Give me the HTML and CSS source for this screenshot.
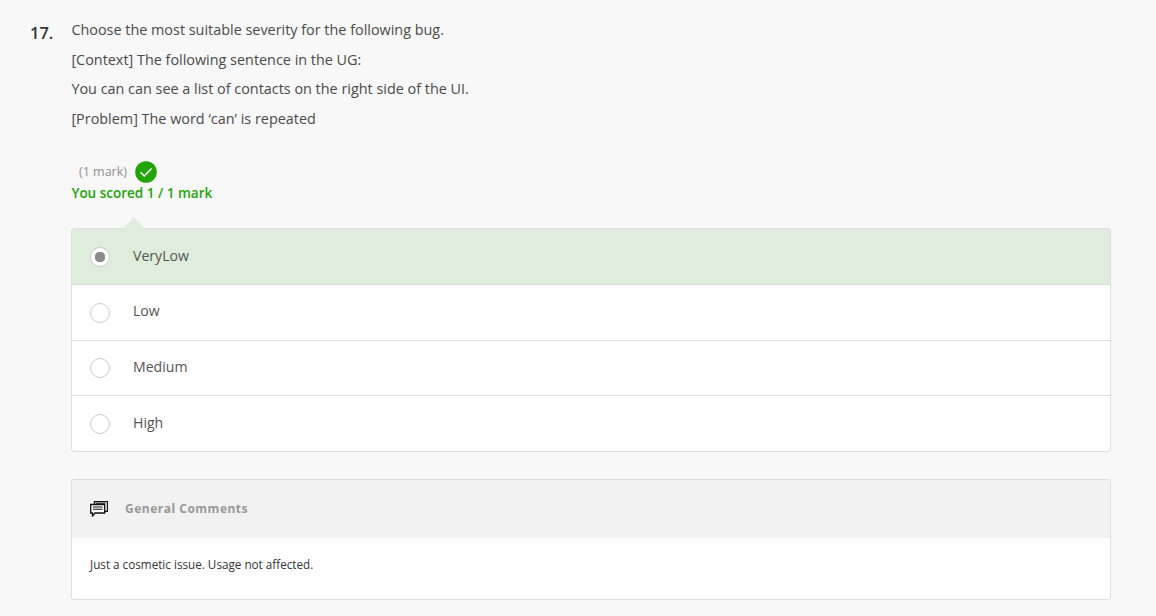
FILE: index.html
```html
<!DOCTYPE html>
<html lang="en">
<head>
  <meta charset="UTF-8">
  <title>Question 17</title>
  <link rel="stylesheet" href="styles.css">
</head>
<body>

  <div class="question">
    <div class="number">17.</div>
    <div class="content">
      <p>Choose the most suitable severity for the following bug.</p>
      <p>[Context] The following sentence in the UG:</p>
      <p>You can can see a list of contacts on the right side of the UI.</p>
      <p>[Problem] The word ‘can’ is repeated</p>

      <div class="marks">
        <span class="mark-count">(1 mark)</span>
        <svg class="tick" width="22" height="22" viewBox="0 0 22 22">
          <circle cx="11" cy="11" r="10.8" fill="#22a50a"/>
          <path d="M5.500 11.200l3.800 3.800 7.200-7.400" fill="none" stroke="#fff" stroke-width="1.500"/>
        </svg>
      </div>
      <div class="score">You scored 1 / 1 mark</div>

      <div class="options">
        <div class="option selected"><span class="radio"></span><span class="label">VeryLow</span></div>
        <div class="option"><span class="radio"></span><span class="label">Low</span></div>
        <div class="option"><span class="radio"></span><span class="label">Medium</span></div>
        <div class="option"><span class="radio"></span><span class="label">High</span></div>
      </div>

      <div class="comments">
        <div class="comments-head">
          <svg class="comments-icon" width="18" height="16" viewBox="0 0 18 16">
            <path d="M4.500 3V.7h13v9.600h-2.500" fill="none" stroke="#111" stroke-width="1.300"/>
            <path d="M.7 3.500h14v8.500H5l-2.500 3v-3H.7z" fill="#fff" stroke="#111" stroke-width="1.300"/>
            <path d="M3 6h9.500M3 8.200h9.500M6 2.200h9.500" stroke="#111" stroke-width="1.100"/>
          </svg>
          <span class="comments-title">General Comments</span>
        </div>
        <div class="comments-body">Just a cosmetic issue. Usage not affected.</div>
      </div>
    </div>
  </div>

</body>
</html>
```

FILE: styles.css
```css
body {
  margin: 0;
  height: 616px;
  overflow: hidden;
  background: #f8f8f8;
  font-family: 'Open Sans', sans-serif;
  font-size: 14.4px;
  color: #4a4a4a;
}

.question {
  display: flex;
  padding: 20px 45px 0 30px;
}

.number {
  width: 41px;
  flex-shrink: 0;
  font-size: 16.500px;
  font-weight: 600;
  line-height: 26px;
  color: #333;
}

.content {
  flex: 1;
}

.content p {
  margin: 0 0 9.6px;
  padding-left: 0.4px;
  line-height: 20px;
  height: 20px;
}

.marks {
  display: flex;
  align-items: center;
  margin-top: 32px;
  padding-left: 8px;
  height: 22px;
}

.mark-count {
  font-size: 12.500px;
  color: #8f8f8f;
}

.tick {
  margin-left: 8px;
}

.score {
  padding-left: 0.4px;
  line-height: 20px;
  font-size: 13.500px;
  font-weight: 600;
  color: #22a50a;
}

.options {
  margin-top: 25.3px;
  background: #fff;
  border: 1px solid #dedede;
  border-radius: 3px;
}

.option {
  position: relative;
  display: flex;
  align-items: center;
  height: 54.750px;
  padding-left: 18px;
  border-top: 1px solid #dedede;
}

.option:first-child {
  border-top: none;
}

.selected {
  background: #dfeddc;
}

/* little arrow above the picked answer */
.selected::before {
  content: "";
  position: absolute;
  left: 51px;
  top: -12px;
  width: 0;
  height: 0;
  border-left: 11px solid transparent;
  border-right: 11px solid transparent;
  border-bottom: 12px solid #dfeddc;
}

.radio {
  box-sizing: border-box;
  width: 20px;
  height: 20px;
  margin: 1px 23px 0 0;
  background: #fff;
  border: 1px solid #ccc;
  border-radius: 50%;
}

.selected .radio {
  background: radial-gradient(circle, #8c8c8c 0, #8c8c8c 5px, #fff 5.500px);
}

.label {
  margin-bottom: 2.600px;
  font-size: 14.100px;
  color: #555;
}

.comments {
  margin-top: 27px;
  background: #fff;
  border: 1px solid #dedede;
  border-radius: 3px;
}

.comments-head {
  display: flex;
  align-items: center;
  box-sizing: border-box;
  height: 58px;
  padding: 0 0 1px 18px;
  background: #f2f2f2;
}

.comments-icon {
  margin-right: 17px;
}

.comments-title {
  font-size: 12px;
  font-weight: 700;
  letter-spacing: 0.5px;
  color: #989898;
}

.comments-body {
  height: 61px;
  padding-left: 18px;
  font-size: 11.700px;
  line-height: 52px;
  color: #333;
}
```
